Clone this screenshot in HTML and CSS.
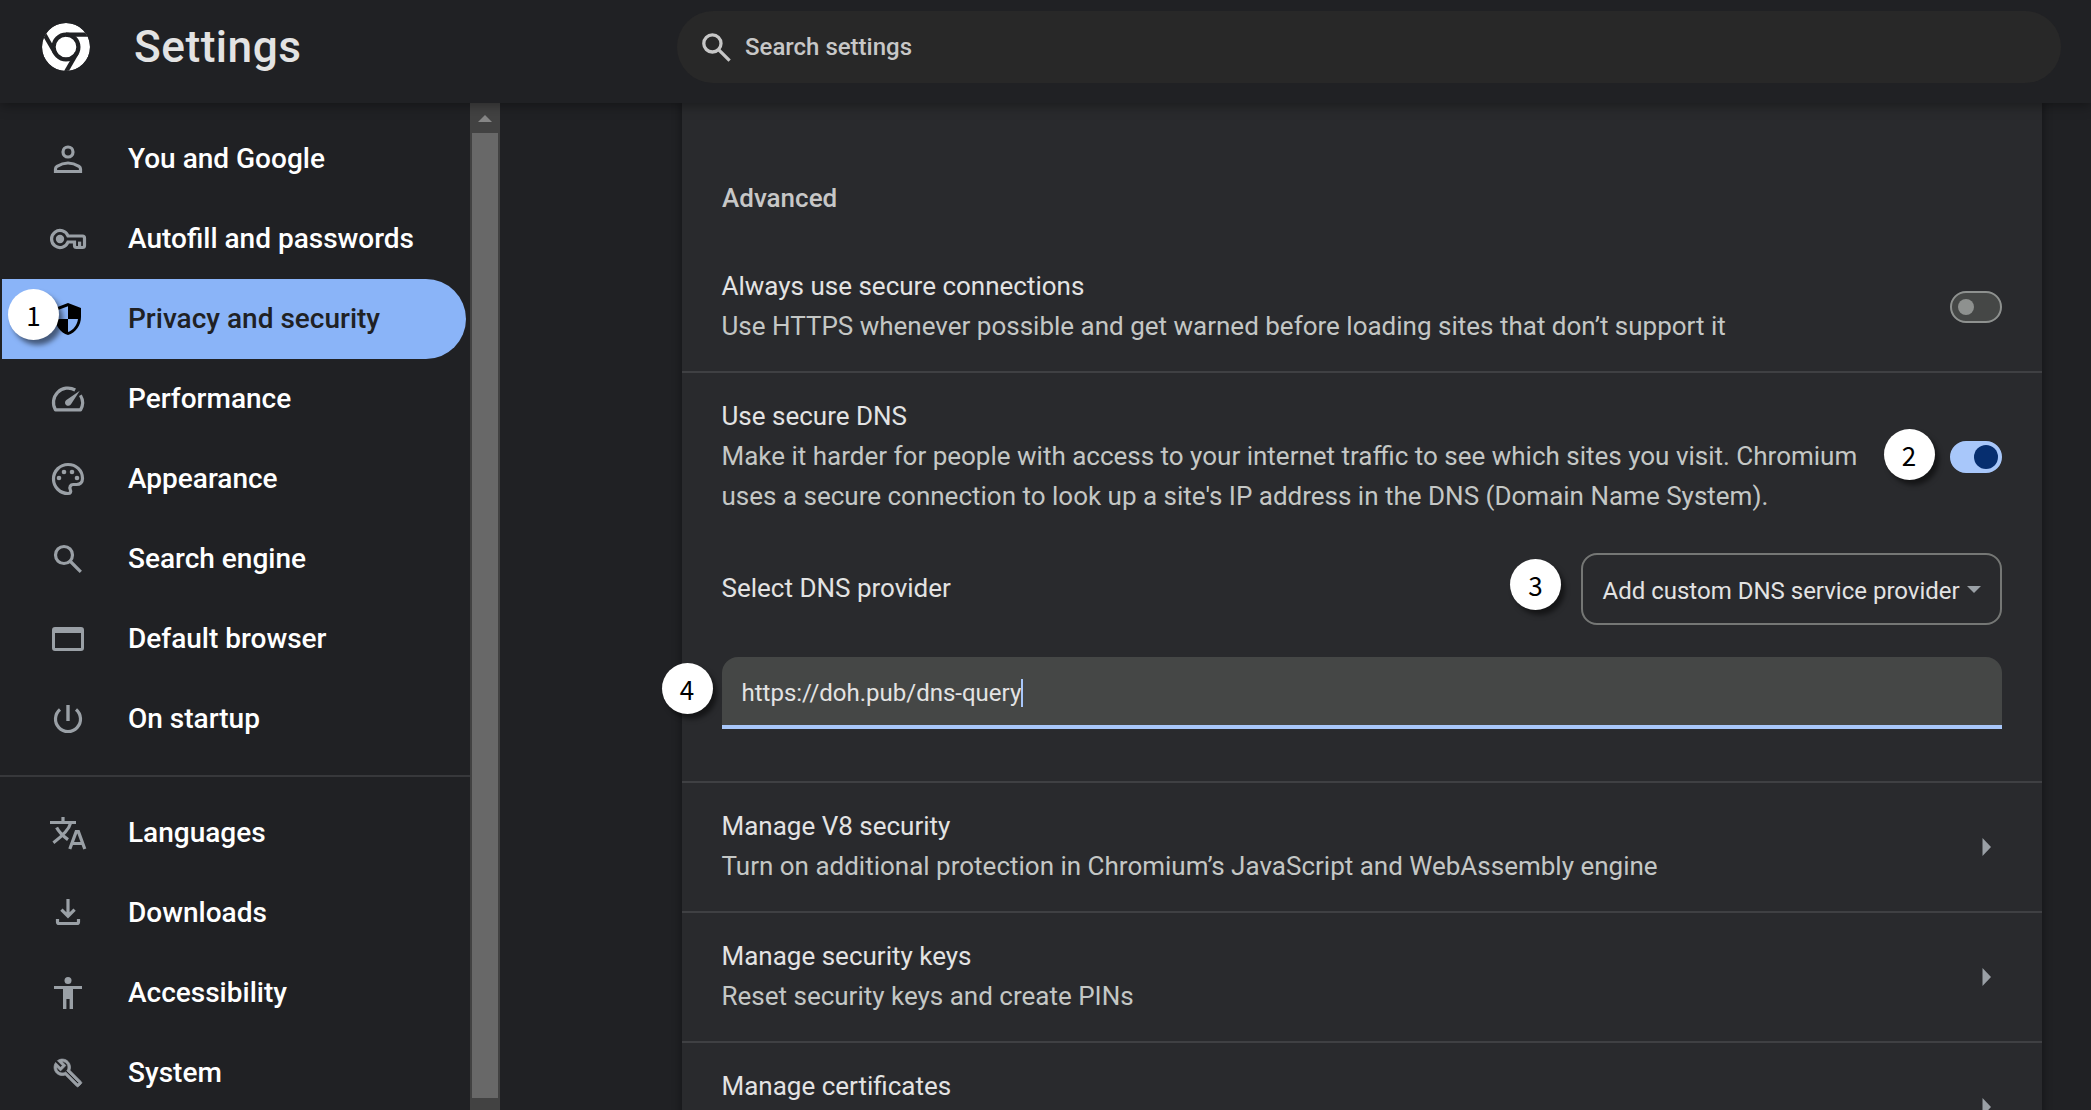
FILE: index.html
```html
<!DOCTYPE html>
<html lang="en">
<head>
<meta charset="utf-8">
<title>Settings</title>
<link rel="stylesheet" href="styles.css">
</head>
<body>
<div class="app">
  <header class="toolbar">
    <div class="brand">
      <svg class="logo" viewBox="0 0 48 48">
        <circle cx="24" cy="24" r="24" fill="#fff"/>
        <g fill="none" stroke="#202124" stroke-width="4.2">
          <circle cx="24" cy="24" r="12.4"/>
          <path d="M24 11.6H48"/>
          <path d="M24 11.6H48" transform="rotate(120 24 24)"/>
          <path d="M24 11.6H48" transform="rotate(240 24 24)"/>
        </g>
      </svg>
      <h1 class="title">Settings</h1>
    </div>
    <div class="search">
      <svg class="search-icon" viewBox="0 0 20 20"><circle cx="8" cy="8" r="4.2"/><path d="M11 11l5.4 5.4"/></svg>
      <span>Search settings</span>
    </div>
  </header>

  <div class="body">
    <nav class="sidebar">
      <a class="item"><svg class="icon" viewBox="0 0 20 20"><circle cx="10" cy="6.5" r="2.5"/><path d="M3.75 16.25V15q0-.9.75-1.35C6.2 12.6 8 12 10 12s3.8.6 5.5 1.65q.75.45.75 1.35v1.25z"/></svg>You and Google</a>
      <a class="item"><svg class="icon" viewBox="0 0 20 20"><circle class="solid" cx="6" cy="10" r="2.1"/><path d="M10 8.5A4.25 4.25 0 1 0 10 11.5H13.25V13.25q0 1 1 1h3q1 0 1-1V9.5q0-1-1-1z"/><path d="M15.8 11.3v2.7"/></svg>Autofill and passwords</a>
      <a class="item selected"><svg class="icon" viewBox="0 0 20 20"><path class="solid" fill-rule="evenodd" d="M10 2L3.5 4.5V9c0 4.1 2.7 7.9 6.5 9 3.8-1.1 6.5-4.9 6.5-9V4.5zM10 3.6V10H15C14.6 13 12.7 15.6 10 16.5V10H5V5.5z"/><path class="solid" d="M10 3V10H15.5V5zM10 10V17C7 15.8 5 13 4.6 10z"/></svg>Privacy and security<span class="badge badge-1">1</span></a>
      <a class="item"><svg class="icon" viewBox="0 0 20 20"><path stroke-linejoin="round" d="M13.6 5.5A7.25 7.25 0 0 0 3.73 15.45H16.27A7.25 7.25 0 0 0 16.2 8.1"/><path class="solid" d="M15.9 5.9L11.5 12.6A1.6 1.6 0 1 1 9.2 10.5Z"/></svg>Performance</a>
      <a class="item"><svg class="icon" viewBox="0 0 20 20"><path d="M10 17.25C11.3 17.25 11.6 16.3 11.2 15.5C10.5 14 11.3 12.75 12.6 12.75H14.3C16 12.75 17.25 11.7 17.25 9.8C17.25 5.6 14 2.75 10 2.75A7.25 7.25 0 0 0 10 17.25Z"/><g class="solid"><circle cx="5.5" cy="9.5" r="1.15"/><circle cx="8" cy="6.5" r="1.15"/><circle cx="12" cy="6.5" r="1.15"/><circle cx="14.5" cy="9.5" r="1.15"/></g></svg>Appearance</a>
      <a class="item"><svg class="icon" viewBox="0 0 20 20"><circle cx="8" cy="8" r="4.25"/><path d="M11 11l5.4 5.4"/></svg>Search engine</a>
      <a class="item"><svg class="icon" viewBox="0 0 20 20"><path class="solid" fill-rule="evenodd" d="M3.5 4h13q1.5 0 1.5 1.5v9q0 1.5-1.5 1.5h-13q-1.5 0-1.5-1.5v-9q0-1.5 1.5-1.5zM3.500 7v7.500h13V7z"/></svg>Default browser</a>
      <a class="item"><svg class="icon" viewBox="0 0 20 20"><path d="M6 5.2A6.25 6.25 0 1 0 14 5.2"/><path stroke-width="1.7" d="M10 3v8"/></svg>On startup</a>
      <hr class="separator">
      <a class="item"><svg class="icon" viewBox="0 0 20 20"><path d="M1 4.75H14M7.5 2V4.5M11.3 5C10.5 8.5 6.5 12 2.7 14.9M4.3 7.2C5.5 9.5 8 11.8 10 13.3"/><path d="M10.9 18L14.1 9.3H15.2L18.4 18M12.3 15.25H17"/></svg>Languages</a>
      <a class="item"><svg class="icon" viewBox="0 0 20 20"><path d="M10 3v8.5M6.7 8.3L10 11.6l3.3-3.3M4.75 13V14.5q0 .75.75.75h9q.75 0 .75-.75V13"/></svg>Downloads</a>
      <a class="item"><svg class="icon" viewBox="0 0 20 20"><circle class="solid" cx="10" cy="3.75" r="1.75"/><path class="solid" d="M3 6.5H17V8H12.5V18H10.8V13H9.2V18H7.5V8H3z"/></svg>Accessibility</a>
      <a class="item"><svg class="icon" viewBox="0 0 20 20"><path class="wrench" transform="translate(2.4 2.4) scale(.633)" d="M22.61 18.99l-9.08-9.08c.93-2.34.45-5.1-1.44-7C9.79.61 6.21.4 3.66 2.26L7.5 6.11 6.08 7.52 2.25 3.69C.39 6.23.6 9.82 2.9 12.11c1.86 1.86 4.57 2.35 6.89 1.48l9.11 9.11c.39.39 1.02.39 1.41 0l2.3-2.3c.4-.38.4-1.01 0-1.41zm-3 1.6l-9.46-9.46c-.61.45-1.29.72-2 .82-1.36.2-2.79-.21-3.83-1.25C3.37 9.76 2.93 8.5 3 7.26l3.09 3.09 4.24-4.24-3.09-3.09c1.24-.07 2.49.37 3.44 1.31 1.08 1.08 1.49 2.57 1.24 3.96-.12.71-.42 1.37-.88 1.96l9.45 9.45-.88.89z"/></svg>System</a>
    </nav>
    <div class="scrollbar">
      <div class="scroll-button"><svg width="14" height="7" viewBox="0 0 14 7"><path d="M7 0l7 7H0z" fill="#868686"/></svg></div>
      <div class="scroll-thumb"></div>
    </div>
    <main class="content">
      <section class="card">
        <h2 class="group-title">Advanced</h2>
        <div class="row first">
          <div class="text">
            <div class="label">Always use secure connections</div>
            <div class="sub">Use HTTPS whenever possible and get warned before loading sites that don’t support it</div>
          </div>
          <span class="toggle"><span class="knob"></span></span>
        </div>
        <div class="row">
          <div class="text">
            <div class="label">Use secure DNS</div>
            <div class="sub">Make it harder for people with access to your internet traffic to see which sites you visit. Chromium<br>uses a secure connection to look up a site's IP address in the DNS (Domain Name System).</div>
          </div>
          <span class="toggle on"><span class="knob"></span></span>
          <span class="badge badge-2">2</span>
        </div>
        <div class="provider">
          <span class="text">Select DNS provider</span>
          <div class="select"><span class="select-value">Add custom DNS service provider</span><svg width="14" height="7" viewBox="0 0 14 7"><path d="M0 0h14L7 7z" fill="#9aa0a6"/></svg></div>
          <span class="badge badge-3">3</span>
        </div>
        <div class="field"><span>https://doh.pub/dns-query</span><span class="caret"></span><span class="badge badge-4">4</span></div>
        <div class="row">
          <div class="text">
            <div class="label">Manage V8 security</div>
            <div class="sub">Turn on additional protection in Chromium’s JavaScript and WebAssembly engine</div>
          </div>
          <svg class="chevron" viewBox="0 0 9 18"><path d="M.5 0L9 9 .5 18z"/></svg>
        </div>
        <div class="row">
          <div class="text">
            <div class="label">Manage security keys</div>
            <div class="sub">Reset security keys and create PINs</div>
          </div>
          <svg class="chevron" viewBox="0 0 9 18"><path d="M.5 0L9 9 .5 18z"/></svg>
        </div>
        <div class="row last">
          <div class="text">
            <div class="label">Manage certificates</div>
          </div>
          <svg class="chevron" viewBox="0 0 9 18"><path d="M.5 0L9 9 .5 18z"/></svg>
        </div>
      </section>
    </main>
  </div>
</div>
</body>
</html>
```

FILE: styles.css
```css
* { box-sizing: border-box; }

body {
  margin: 0;
  background: #202124;
  color: #e3e3e3;
  font-family: Roboto, "Liberation Sans", sans-serif;
  font-size: 26px;
  line-height: 40px;
}

.app {
  display: flex;
  flex-direction: column;
  height: 1110px;
  overflow: hidden;
}

.toolbar {
  position: relative;
  z-index: 2;
  display: flex;
  flex: none;
  height: 103px;
  padding-top: 11px;
  background: #202124;
  box-shadow: 0 2px 12px rgba(0, 0, 0, .4);
}

.brand {
  display: flex;
  align-items: center;
  width: 677px;
  height: 72px;
  padding-left: 42px;
  gap: 44px;
}

.logo { width: 48px; height: 48px; border-radius: 50%; }

.title {
  margin: 0;
  font-size: 44.2px;
  font-weight: 500;
  letter-spacing: .5px;
  line-height: 64px;
}

.search {
  display: flex;
  align-items: center;
  width: 1384px;
  height: 72px;
  padding-left: 19px;
  gap: 8px;
  border-radius: 36px;
  background: #282828;
  color: #c7c7c7;
  font-size: 24px;
  font-weight: 500;
}

.search-icon {
  width: 41px;
  height: 41px;
  fill: none;
  stroke: #c7c7c7;
  stroke-width: 1.6;
}

.body { display: flex; flex: 1; min-height: 0; }

.sidebar {
  width: 470px;
  flex: none;
  padding-top: 16px;
}

.item {
  position: relative;
  display: flex;
  align-items: center;
  width: 464px;
  height: 80px;
  margin-left: 2px;
  padding-left: 46px;
  gap: 40px;
  border-radius: 0 40px 40px 0;
  color: #fff;
  font-size: 28px;
  font-weight: 500;
}

.icon {
  width: 40px;
  height: 40px;
  fill: none;
  stroke: #9aa0a6;
  stroke-width: 1.6;
}

.solid { fill: #9aa0a6; stroke: none; }
.wrench { fill: #9aa0a6; stroke-width: .6; }

.selected { background: #8ab4f8; color: #202124; }
.selected .solid { fill: #000; }

.separator {
  height: 2px;
  margin: 16px 0;
  border: 0;
  background: #37383b;
}

.scrollbar {
  width: 30px;
  flex: none;
  background: #424242;
}

.scroll-button {
  display: flex;
  align-items: center;
  justify-content: center;
  height: 30px;
}

.scroll-thumb {
  height: 965px;
  margin: 0 2px;
  background: #686868;
}

.content { flex: 1; padding-left: 182px; }

.card {
  width: 1360px;
  height: 1100px;
  padding-top: 75px;
  background: #292a2d;
  box-shadow: 0 0 8px 2px rgba(0, 0, 0, .3);
}

.group-title {
  margin: 0 40px;
  color: #c7c7c7;
  font-size: 26px;
  font-weight: 500;
  line-height: 40px;
}

.row {
  position: relative;
  display: flex;
  align-items: center;
  justify-content: space-between;
  padding: 24px 40px;
  border-top: 2px solid #3f4043;
}

.first { margin-top: 25px; border-top: 0; }
.last { height: 130px; align-items: stretch; }
.last .chevron { align-self: center; }

.text { margin: -1px 0 1px -.5px; }
.sub { color: #c4c7c5; white-space: nowrap; }

.toggle {
  display: flex;
  align-items: center;
  flex: none;
  width: 52px;
  height: 32px;
  padding: 0 6px;
  border: 2px solid #8e918f;
  border-radius: 16px;
  background: #454746;
}

.knob { width: 16px; height: 16px; border-radius: 50%; background: #8e918f; }

.on {
  justify-content: flex-end;
  padding: 0 2px;
  border-color: #a8c7fa;
  background: #a8c7fa;
}

.on .knob { width: 24px; height: 24px; background: #062e6f; }

.provider {
  position: relative;
  display: flex;
  align-items: center;
  justify-content: space-between;
  height: 72px;
  margin: 12px 40px 32px;
}

.select {
  display: flex;
  align-items: center;
  width: 421px;
  height: 72px;
  padding-left: 19.5px;
  gap: 7px;
  border: 2px solid #757775;
  border-radius: 16px;
  font-size: 24px;
}

.select-value { padding-top: 4px; }

.field {
  position: relative;
  display: flex;
  align-items: center;
  height: 72px;
  margin: 0 40px 52px;
  padding: 4px 0 0 19.5px;
  border-bottom: 4px solid #a8c7fa;
  border-radius: 16px 16px 0 0;
  background: #454746;
  font-size: 24px;
}

.caret { width: 2px; height: 28px; background: #a8c7fa; }

.chevron { width: 9px; height: 18px; margin-right: 11px; fill: #9aa0a6; }

.badge {
  position: absolute;
  width: 51px;
  height: 51px;
  border-radius: 50%;
  background: #fff;
  box-shadow: 4px 5px 5px rgba(0, 0, 0, .5);
  color: #000;
  font: 400 26px/51px "Noto Sans CJK SC", sans-serif;
  text-align: center;
}

.badge-1 { left: 6px; top: 10px; }
.badge-2 { left: 1201.5px; top: 56px; }
.badge-3 { left: 788px; top: 6px; }
.badge-4 { left: -60.5px; top: 6px; }
```
